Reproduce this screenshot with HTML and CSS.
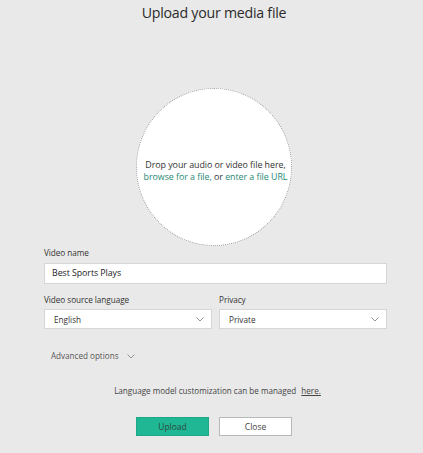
FILE: index.html
```html
<!DOCTYPE html>
<html>
<head>
<meta charset="utf-8">
<link rel="stylesheet" href="styles.css">
</head>
<body>
<div class="page">
  <h1 class="title">Upload your media file</h1>
  <div class="drop">
    <div class="drop-text">
      <div>Drop your audio or video file here,</div>
      <div><a class="link">browse for a file,</a> or <a class="link">enter a file URL</a></div>
    </div>
  </div>
  <div class="form">
    <div class="label">Video name</div>
    <div class="input">Best Sports Plays</div>
    <div class="row">
      <div class="col">
        <div class="label">Video source language</div>
        <div class="select"><span>English</span>
          <svg class="chev" width="8" height="5" viewBox="0 0 8 5"><path d="M0.5 0.5 L4 4 L7.5 0.5" fill="none" stroke="#8a8a8a" stroke-width="0.9"/></svg>
        </div>
      </div>
      <div class="col">
        <div class="label">Privacy</div>
        <div class="select"><span>Private</span>
          <svg class="chev" width="8" height="5" viewBox="0 0 8 5"><path d="M0.5 0.5 L4 4 L7.5 0.5" fill="none" stroke="#8a8a8a" stroke-width="0.9"/></svg>
        </div>
      </div>
    </div>
    <div class="advanced">Advanced options
      <svg class="chev-adv" width="8" height="5" viewBox="0 0 8 5"><path d="M0.5 0.5 L4 4 L7.5 0.5" fill="none" stroke="#8a8a8a" stroke-width="0.9"/></svg>
    </div>
    <div class="lm">Language model customization can be managed <a class="here">here.</a></div>
    <div class="buttons">
      <button class="btn primary">Upload</button>
      <button class="btn secondary">Close</button>
    </div>
  </div>
</div>
</body>
</html>
```

FILE: styles.css
```css
html, body {
  margin: 0;
  padding: 0;
  background: #e9e9e9;
}
body {
  font-family: "Open Sans", "Noto Sans", sans-serif;
  color: #333;
  width: 423px;
  height: 453px;
  overflow: hidden;
}
.page {
  display: flex;
  flex-direction: column;
  align-items: center;
}
.title {
  margin: 0;
  font-size: 14.2px;
  font-weight: 400;
  line-height: 26px;
  color: #2b2b2b;
  letter-spacing: -0.25px;
  margin-left: 5px;
}
.drop {
  margin-top: 62px;
  width: 154px;
  height: 156px;
  border: 1px dotted #9a9a9a;
  border-radius: 50%;
  background: #fff;
  display: flex;
  align-items: center;
  justify-content: center;
  margin-left: 4px;
}
.drop-text {
  font-size: 8.9px;
  line-height: 12px;
  text-align: center;
  color: #333;
  margin-top: 8px;
  margin-left: 4px;
  white-space: nowrap;
  letter-spacing: -0.05px;
}
.link {
  color: #1f8a74;
}
.form {
  width: 343px;
  margin-left: 8px;
  display: flex;
  flex-direction: column;
}
.label {
  font-size: 8.2px;
  line-height: 14px;
  color: #333;
  letter-spacing: -0.05px;
}
.input {
  margin-top: 3px;
  height: 21px;
  box-sizing: border-box;
  background: #fff;
  border: 1px solid #d6d6d6;
  padding-left: 7px;
  font-size: 8.8px;
  line-height: 19px;
  color: #222;
  letter-spacing: -0.05px;
}
.row {
  display: flex;
  gap: 7px;
  margin-top: 9px;
}
.col {
  flex: 1;
  display: flex;
  flex-direction: column;
}
.select {
  margin-top: 2px;
  height: 20px;
  box-sizing: border-box;
  background: #fff;
  border: 1px solid #d6d6d6;
  padding: 0 7px 0 9px;
  font-size: 8.2px;
  color: #333;
  display: flex;
  align-items: center;
  justify-content: space-between;
}
.chev {
  display: block;
}
.advanced {
  margin-top: 20px;
  margin-left: 7px;
  font-size: 8.1px;
  line-height: 14px;
  color: #555;
  display: flex;
  align-items: center;
  gap: 8px;
}
.lm {
  margin-top: 21px;
  font-size: 8.1px;
  line-height: 14px;
  color: #444;
  text-align: center;
  margin-left: 4px;
}
.here {
  margin-left: 3px;
  text-decoration: underline;
  color: #444;
}
.buttons {
  margin-top: 19px;
  display: flex;
  justify-content: center;
  gap: 10px;
  margin-left: -3px;
}
.btn {
  width: 73px;
  height: 19px;
  box-sizing: border-box;
  font-family: inherit;
  font-size: 8.5px;
  padding: 0;
  margin: 0;
  cursor: pointer;
}
.primary {
  background: #20b795;
  border: 1px solid #1da887;
  color: #2a4a40;
}
.secondary {
  background: #fff;
  border: 1px solid #b8b8b8;
  color: #444;
}
```
